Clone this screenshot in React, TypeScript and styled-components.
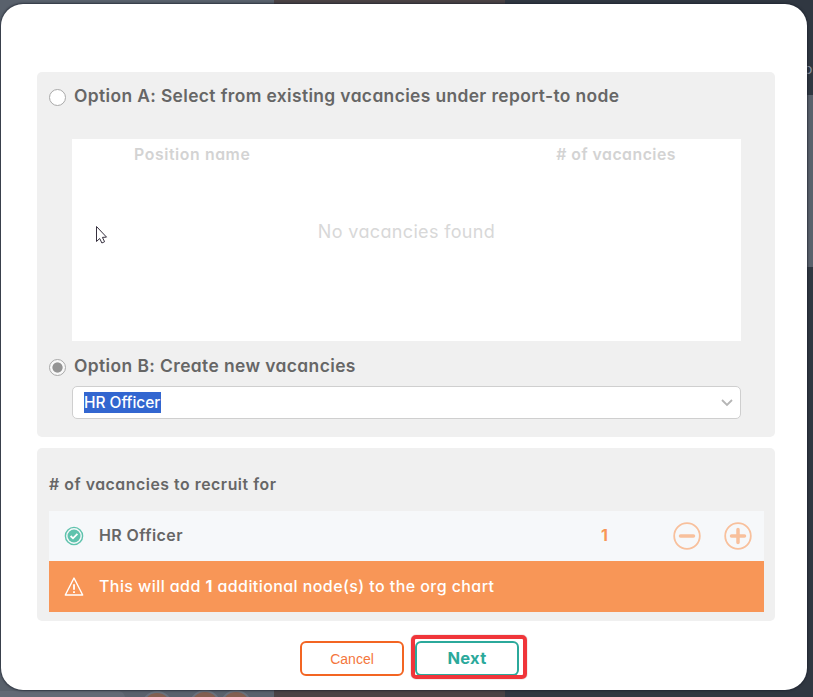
import React from "react";
import styled, { createGlobalStyle } from "styled-components";

const GlobalStyle = createGlobalStyle`
  *, *::before, *::after { box-sizing: border-box; }
  body { margin: 0; overflow: hidden; }
  svg { display: block; flex: none; }
`;

const Backdrop = styled.div`
  position: relative;
  width: 813px;
  height: 697px;
  padding: 4px 6px 6px 1px;
  overflow: hidden;
  background: linear-gradient(90deg, #59616c 0 274px, #4a4244 274px 505px, #303741 505px);
  font-family: Inter, "Open Sans", sans-serif;
  font-feature-settings: "cv11" 1, "calt" 0;
  color: #666;
`;

const SideCard = styled.div`
  position: absolute;
  top: 95px;
  right: 0;
  width: 8px;
  height: 172px;
  background: #5a616c;
`;

const SideLetter = styled.span`
  position: absolute;
  top: 61px;
  left: 804px;
  font-size: 14px;
  line-height: 16px;
  color: #8b94a5;
`;

const NodeDots = styled.svg`
  position: absolute;
  left: 0;
  bottom: 0;
`;

const Modal = styled.main`
  position: relative;
  display: flex;
  flex-direction: column;
  height: 686px;
  padding: 68px 32px 0 36px;
  border-radius: 22px;
  background: #fff;
  box-shadow: 0 0 2px 1px rgba(25, 31, 43, 0.65);
`;

const Panel = styled.section<{ $height: number }>`
  flex: none;
  height: ${(p) => p.$height}px;
  border-radius: 5px;
  background: #f0f0f0;
  & + & { margin-top: 11px; }
`;

const OptionRow = styled.label<{ $height: number; $top: number }>`
  display: flex;
  gap: 8px;
  height: ${(p) => p.$height}px;
  padding: ${(p) => p.$top}px 0 0 12px;
`;

const Radio = styled.span<{ $checked?: boolean }>`
  flex: none;
  width: 17px;
  height: 17px;
  margin-top: 3px;
  border: 1.5px solid #a9a9a9;
  border-radius: 50%;
  background: ${(p) => (p.$checked ? "radial-gradient(circle, #949494 0 4.7px, #f8f8f8 5.5px)" : "#fff")};
`;

const Label = styled.span<{ $size: number; $spacing: number; $weight?: number; $color?: string }>`
  white-space: nowrap;
  font-size: ${(p) => p.$size}px;
  line-height: 20px;
  font-weight: ${(p) => p.$weight ?? 600};
  letter-spacing: ${(p) => p.$spacing}px;
  color: ${(p) => p.$color ?? "inherit"};
`;

const VacancyTable = styled.div`
  position: relative;
  width: 669px;
  height: 202px;
  margin-left: 35px;
  background: #fff;
`;

const TableHead = styled.div`
  display: flex;
  justify-content: space-between;
  padding: 6px 65px 0 62px;
`;

const EmptyState = styled.div`
  display: flex;
  justify-content: center;
  padding-top: 57px;
`;

const Pointer = styled.svg`
  position: absolute;
  left: 23px;
  top: 86px;
`;

const Select = styled.div`
  display: flex;
  align-items: center;
  justify-content: space-between;
  width: 669px;
  height: 33px;
  margin-left: 35px;
  padding: 0 7px 0 11px;
  border: 1px solid #cfcfcf;
  border-radius: 5px;
  background: #fff;
`;

const Selection = styled.span`
  display: flex;
  align-items: center;
  width: 77px;
  height: 21px;
  background: #3266d0;
`;

const Title = styled.div`
  height: 63px;
  padding: 26px 0 0 12px;
`;

const VacancyRow = styled.div`
  display: grid;
  grid-template-columns: 50px 502px 72px 51px 28px;
  align-items: center;
  width: 715px;
  height: 50px;
  margin-left: 12px;
  background: #f6f8fa;
  & > svg:first-child { margin-left: 15px; }
  & > ${Label} { margin-top: -2px; }
`;

const Notice = styled.div`
  display: flex;
  align-items: center;
  gap: 15px;
  width: 715px;
  height: 51px;
  margin-left: 12px;
  padding-left: 15px;
  background: #f89657;
  & > ${Label} { margin-top: -2px; }
`;

const Actions = styled.footer`
  display: flex;
  gap: 7px;
  padding: 14px 0 0 263px;
`;

const Button = styled.button<{ $color: string }>`
  display: flex;
  align-items: center;
  justify-content: center;
  width: 104px;
  height: 35px;
  padding: 0;
  border: 2px solid ${(p) => p.$color};
  border-radius: 6px;
  background: #fff;
  color: ${(p) => p.$color};
`;

const CancelButton = styled(Button)`
  margin-top: 6px;
  color: #f4763c;
  font: 14px "Liberation Sans", Arial, sans-serif;
`;

const NextButton = styled(Button)`
  padding-bottom: 2px;
  font-feature-settings: inherit;
  font-family: inherit;
`;

const Highlight = styled.div`
  width: 116px;
  height: 44px;
  padding: 2px 0 0;
  border: 4px solid #f0353a;
  border-radius: 5px;
  box-shadow: 0 0 1px #93494d;
  overflow: hidden;
`;

const CheckIcon = () => (
  <svg width="20" height="20" viewBox="0 0 20 20" fill="none">
    <circle cx="10" cy="10" r="8.6" stroke="#5fc3ad" strokeWidth="1.4" />
    <circle cx="10" cy="10" r="6.5" fill="#5fc3ad" />
    <path d="m6.6 10 2.4 2.3 4.4-4.4" stroke="#fff" strokeWidth="1.8" />
  </svg>
);

const WarningIcon = () => (
  <svg width="20" height="20" viewBox="0 0 20 20" fill="none" stroke="#fff">
    <path d="M10 1 18.7 18H1.3Z" strokeWidth="1.4" strokeLinejoin="round" />
    <path d="M10 7.2v5.5M10 14.2v1.8" strokeWidth="1.8" />
  </svg>
);

const StepIcon = ({ plus }: { plus?: boolean }) => (
  <svg width="28" height="28" viewBox="0 0 28 28" fill="none" stroke="#f8c09c" strokeLinecap="round">
    <circle cx="14" cy="14" r="12.8" strokeWidth="1.8" />
    <path d={plus ? "M7.5 14h13M14 7.5v13" : "M7.5 14h13"} strokeWidth="3.5" />
  </svg>
);

export default function App() {
  return (
    <>
      <GlobalStyle />
      <Backdrop>
        <SideCard />
        <SideLetter>o</SideLetter>
        <NodeDots width="274" height="7" viewBox="0 0 274 7">
          <path d="M0 1h119q5 1 6 6H0Z" fill="#626975" />
          <g fill="#825f51" stroke="#69717d" strokeWidth="2">
            <circle cx="157" cy="17" r="15" />
            <circle cx="205" cy="16" r="15" />
            <circle cx="236" cy="16" r="15" />
          </g>
        </NodeDots>
        <Modal>
          <Panel $height={365}>
            <OptionRow $height={67} $top={14}>
              <Radio />
              <Label $size={17.4} $spacing={0.38}>Option A: Select from existing vacancies under report-to node</Label>
            </OptionRow>
            <VacancyTable>
              <TableHead>
                <Label $size={15.8} $spacing={0.6} $color="#d3d3d3">Position name</Label>
                <Label $size={15.8} $spacing={0.5} $color="#d3d3d3"># of vacancies</Label>
              </TableHead>
              <EmptyState>
                <Label $size={18} $spacing={0.35} $weight={400} $color="#d8d8d8">No vacancies found</Label>
              </EmptyState>
              <Pointer width="14" height="20" viewBox="0 0 14 20">
                <path d="M1.5 1.5v15l3.2-3 2.2 4.5 2.7-1.3-2.2-4.3 4.1-.3Z" fill="#fff" stroke="#37313f" strokeWidth="1" />
              </Pointer>
            </VacancyTable>
            <OptionRow $height={45} $top={15}>
              <Radio $checked />
              <Label $size={17.4} $spacing={0.41}>Option B: Create new vacancies</Label>
            </OptionRow>
            <Select>
              <Selection>
                <Label $size={15.5} $spacing={-0.05} $weight={500} $color="#fff">HR Officer</Label>
              </Selection>
              <svg width="12" height="10" viewBox="0 0 12 10" fill="none">
                <path d="m1 2 5 5 5-5" stroke="#b5b5b5" strokeWidth="1.8" />
              </svg>
            </Select>
          </Panel>
          <Panel $height={173}>
            <Title>
              <Label $size={15.8} $spacing={0.55}># of vacancies to recruit for</Label>
            </Title>
            <VacancyRow>
              <CheckIcon />
              <Label $size={16} $spacing={0.4}>HR Officer</Label>
              <Label $size={16} $spacing={0} $weight={700} $color="#f89657">1</Label>
              <StepIcon />
              <StepIcon plus />
            </VacancyRow>
            <Notice>
              <WarningIcon />
              <Label $size={16} $spacing={0.42} $weight={500} $color="#fff">This will add <b>1</b> additional node(s) to the org chart</Label>
            </Notice>
          </Panel>
          <Actions>
            <CancelButton $color="#f36523">Cancel</CancelButton>
            <Highlight>
              <NextButton $color="#2ba99b">
                <Label $size={16.5} $spacing={0.3} $weight={700}>Next</Label>
              </NextButton>
            </Highlight>
          </Actions>
        </Modal>
      </Backdrop>
    </>
  );
}
